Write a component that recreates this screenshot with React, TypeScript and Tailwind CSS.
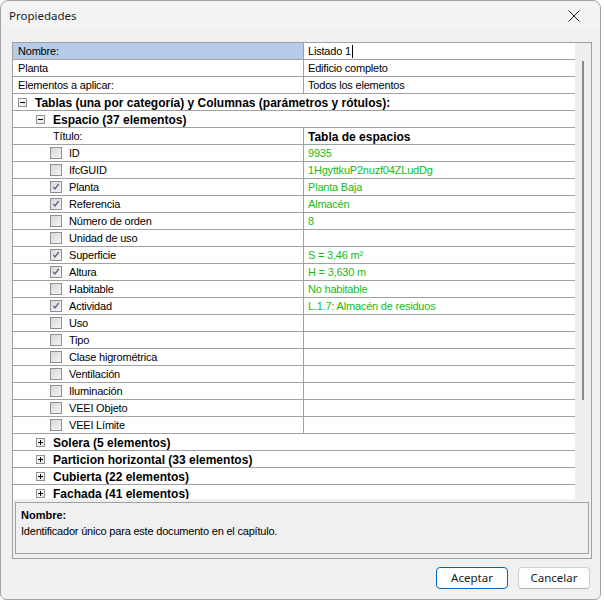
import React from 'react';

type Item = { label: string; value: string; checked: boolean };

const items: Item[] = [
  { label: 'ID', value: '9935', checked: false },
  { label: 'IfcGUID', value: '1HgyttkuP2nuzf04ZLudDg', checked: false },
  { label: 'Planta', value: 'Planta Baja', checked: true },
  { label: 'Referencia', value: 'Almacén', checked: true },
  { label: 'Número de orden', value: '8', checked: false },
  { label: 'Unidad de uso', value: '', checked: false },
  { label: 'Superficie', value: 'S = 3,46 m²', checked: true },
  { label: 'Altura', value: 'H = 3,630 m', checked: true },
  { label: 'Habitable', value: 'No habitable', checked: false },
  { label: 'Actividad', value: 'L.1.7: Almacén de residuos', checked: true },
  { label: 'Uso', value: '', checked: false },
  { label: 'Tipo', value: '', checked: false },
  { label: 'Clase higrométrica', value: '', checked: false },
  { label: 'Ventilación', value: '', checked: false },
  { label: 'Iluminación', value: '', checked: false },
  { label: 'VEEI Objeto', value: '', checked: false },
  { label: 'VEEI Límite', value: '', checked: false },
];

const collapsed = [
  'Solera (5 elementos)',
  'Particion horizontal (33 elementos)',
  'Cubierta (22 elementos)',
  'Fachada (41 elementos)',
];

function ExpandBox({ open }: { open: boolean }) {
  return (
    <span className="relative w-[9px] h-[9px] shrink-0 border border-[#919191] bg-gradient-to-br from-white to-[#e4e4e4]">
      <span className="absolute left-[1px] top-[3px] w-[5px] h-[1px] bg-black" />
      {!open && <span className="absolute left-[3px] top-[1px] w-[1px] h-[5px] bg-black" />}
    </span>
  );
}

function CheckBox({ checked }: { checked: boolean }) {
  return (
    <span className="relative w-[12px] h-[12px] shrink-0 border border-[#8f8f8f] bg-gradient-to-br from-[#d8d8d8] to-[#f4f4f4]">
      {checked && (
        <svg width="10" height="10" viewBox="0 0 10 10" className="absolute left-0 top-0">
          <path d="M2.3 4.8 L4 7 L7.7 2" stroke="#52648a" strokeWidth="1.3" fill="none" />
        </svg>
      )}
    </span>
  );
}

function PropRow({
  label,
  value,
  selected,
  cursor,
}: {
  label: string;
  value: string;
  selected?: boolean;
  cursor?: boolean;
}) {
  return (
    <div className="flex h-[17px] border-b border-[#a0a0a0]">
      <div className={`w-[290px] pl-[5px] pt-[1px] flex items-center ${selected ? 'bg-[#b6cbe7]' : 'bg-white'}`}>
        {label}
      </div>
      <div className="flex-1 border-l border-[#a0a0a0] pl-[4px] pt-[1px] flex items-center bg-white">
        {value}
        {cursor && <span className="ml-[1px] w-[1px] h-[13px] bg-black" />}
      </div>
    </div>
  );
}

function GroupRow({ text, open, indent }: { text: string; open: boolean; indent: number }) {
  return (
    <div className="flex items-center h-[17px] border-b border-[#a0a0a0] bg-white" style={{ paddingLeft: indent }}>
      <ExpandBox open={open} />
      <span className="ml-[8px] pt-[1px] font-bold text-[12px] tracking-normal">{text}</span>
    </div>
  );
}

export default function App() {
  return (
    <div className="w-[604px] h-[601px] bg-white overflow-hidden font-['Liberation_Sans',Arial,sans-serif] text-[11px] tracking-[-0.2px] text-black">
      <div className="w-[601px] h-[600px] rounded-t-[8px] rounded-b-[6px] border border-[#a3a3a3] bg-[#f0f0f0] flex flex-col">
        <div className="h-[29px] flex items-center justify-between pl-[8px] pr-[20px] bg-[#f3f3f3] rounded-t-[8px]">
          <span className="font-['Noto_Sans',sans-serif] text-[11.5px] tracking-normal text-[#1a1a1a]">Propiedades</span>
          <svg width="12" height="12" viewBox="0 0 12 12">
            <path d="M0.5 0.5 L11.5 11.5 M11.5 0.5 L0.5 11.5" stroke="#222" strokeWidth="1" />
          </svg>
        </div>

        <div className="mt-[12px] ml-[11px] w-[580px] h-[517px] border border-[#a0a0a0] flex flex-col">
          <div className="flex h-[456px]">
            <div className="w-[562px] overflow-hidden">
              <PropRow label="Nombre:" value="Listado 1" selected cursor />
              <PropRow label="Planta" value="Edificio completo" />
              <PropRow label="Elementos a aplicar:" value="Todos los elementos" />
              <GroupRow text="Tablas (una por categoría) y Columnas (parámetros y rótulos):" open indent={5} />
              <GroupRow text="Espacio (37 elementos)" open indent={23} />
              <div className="flex h-[17px] border-b border-[#a0a0a0] bg-white">
                <div className="w-[290px] pl-[40px] pt-[1px] flex items-center">Título:</div>
                <div className="flex-1 border-l border-[#a0a0a0] pl-[4px] pt-[1px] flex items-center font-bold text-[12px] tracking-normal">
                  Tabla de espacios
                </div>
              </div>
              {items.map((it) => (
                <div key={it.label} className="flex h-[17px] border-b border-[#a0a0a0] bg-white">
                  <div className="w-[290px] pl-[37px] flex items-center">
                    <CheckBox checked={it.checked} />
                    <span className="ml-[7px] pt-[1px]">{it.label}</span>
                  </div>
                  <div className="flex-1 border-l border-[#a0a0a0] pl-[4px] pt-[1px] flex items-center text-[#16bb16]">
                    {it.value}
                  </div>
                </div>
              ))}
              {collapsed.map((c) => (
                <GroupRow key={c} text={c} open={false} indent={23} />
              ))}
            </div>
            <div className="w-[16px] bg-[#eeeeee] pt-[18px] flex flex-col items-center">
              <div className="w-[2px] h-[339px] bg-[#8a8a8a] ml-[-1px]" />
            </div>
          </div>

          <div className="mt-[3px] mx-[2px] h-[52px] border border-[#a0a0a0] pl-[5px] pt-[4px] leading-[16px]">
            <div className="font-bold tracking-normal">Nombre:</div>
            <div>Identificador único para este documento en el capítulo.</div>
          </div>
        </div>

        <div className="mt-[8px] flex justify-end gap-[10px] pr-[10px] font-['Noto_Sans',sans-serif] text-[11.5px] tracking-normal">
          <button className="w-[72px] h-[22px] rounded-[4px] border border-[#0067c0] bg-[#fdfdfd] flex items-center justify-center text-[#1a1a1a]">
            Aceptar
          </button>
          <button className="w-[72px] h-[22px] rounded-[4px] border border-[#d0d0d0] border-b-[#b0b0b0] bg-[#fdfdfd] flex items-center justify-center text-[#1a1a1a]">
            Cancelar
          </button>
        </div>
      </div>
    </div>
  );
}
